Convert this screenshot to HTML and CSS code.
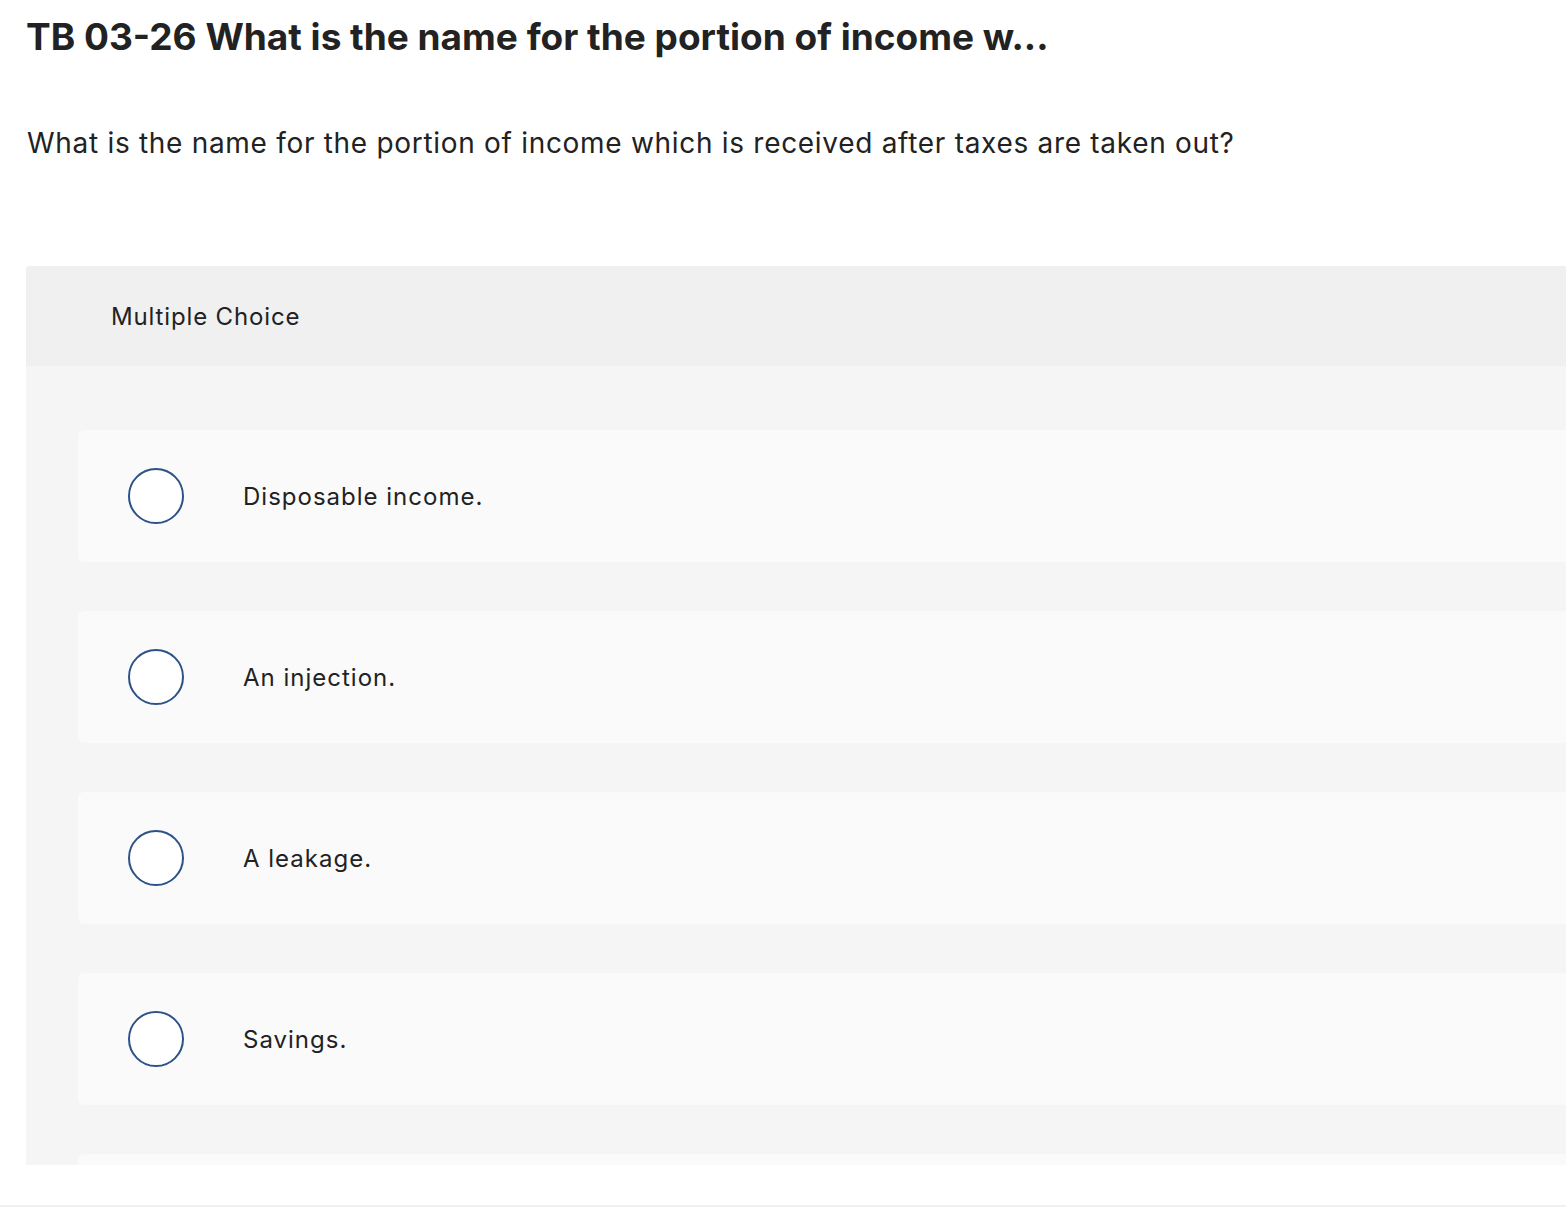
FILE: index.html
```html
<!DOCTYPE html>
<html lang="en">
<head>
    <meta charset="UTF-8">
    <meta name="viewport" content="width=device-width, initial-scale=1.0">
    <title>TB 03-26</title>
    <link rel="stylesheet" href="styles.css">
</head>
<body>
    <div class="page">
        <h1 class="title">TB 03-26 What is the name for the portion of income w...</h1>
        <p class="question">What is the name for the portion of income which is received after taxes are taken out?</p>

        <div class="quiz">
            <div class="quiz-head">Multiple Choice</div>
            <div class="quiz-body">
                <label class="option">
                    <span class="radio"></span>
                    <span class="option-text">Disposable income.</span>
                </label>
                <label class="option">
                    <span class="radio"></span>
                    <span class="option-text">An injection.</span>
                </label>
                <label class="option">
                    <span class="radio"></span>
                    <span class="option-text">A leakage.</span>
                </label>
                <label class="option">
                    <span class="radio"></span>
                    <span class="option-text">Savings.</span>
                </label>
                <div class="option"></div>
            </div>
        </div>
    </div>
    <div class="footer-line"></div>
</body>
</html>
```

FILE: styles.css
```css
body {
    margin: 0;
    font-family: Inter, Lato, sans-serif;
    color: #222;
    background: #fff;
    overflow: hidden;
}

.page {
    padding-left: 26px;
    margin-right: -40px;
}

.title {
    margin: 0;
    padding-top: 14px;
    font-size: 37px;
    line-height: 46px;
    font-weight: 700;
}

.question {
    margin: 65px 0 0 1px;
    font-size: 28px;
    line-height: 36px;
    letter-spacing: 0.7px;
}

.quiz {
    margin-top: 105px;
    height: 899px;
    overflow: hidden;
    background: #f5f5f5;
    border-radius: 4px 0 0 0;
}

.quiz-head {
    height: 100px;
    display: flex;
    align-items: center;
    padding-left: 85px;
    background: #f0f0f0;
    font-size: 24px;
    letter-spacing: 0.85px;
}

.quiz-body {
    padding: 64px 0 0 52px;
    display: flex;
    flex-direction: column;
    gap: 49px;
}

.option {
    height: 132px;
    flex: none;
    display: flex;
    align-items: center;
    background: #fafafa;
    border-radius: 6px 0 0 6px;
    padding-left: 50px;
    font-size: 24px;
    letter-spacing: 1px;
}

.radio {
    width: 52px;
    height: 52px;
    border: 2px solid #2c5288;
    border-radius: 50%;
    background: #fff;
    flex: none;
}

.option-text {
    margin-left: 59px;
}

.footer-line {
    position: fixed;
    left: 0;
    right: 0;
    top: 1205px;
    height: 2px;
    background: #f0f0f0;
}
```
